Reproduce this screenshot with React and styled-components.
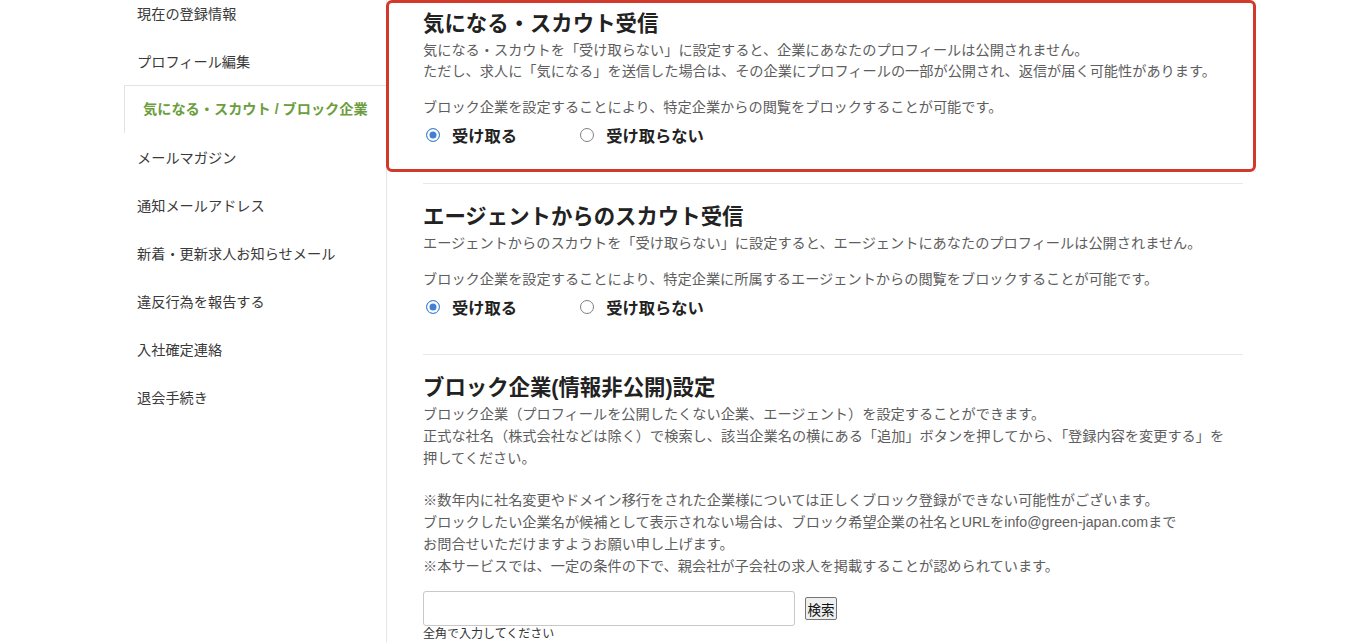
import React from "react";
import styled, { createGlobalStyle } from "styled-components";

const GlobalStyle = createGlobalStyle`
  html, body {
    margin: 0;
    padding: 0;
    overflow: hidden;
    background: #fff;
  }
  body {
    font-family: "Liberation Sans", "Noto Sans CJK JP", sans-serif;
    color: #333;
  }
`;

const Page = styled.div`
  display: flex;
  align-items: stretch;
  padding-left: 124px;
  min-height: 100vh;
`;

const Sidebar = styled.nav`
  width: 263px;
  flex-shrink: 0;
  box-sizing: border-box;
  border-right: 1px solid #e6e6e6;
  margin-top: -11px;
  display: flex;
  flex-direction: column;
`;

const NavItem = styled.div`
  height: 48px;
  box-sizing: border-box;
  display: flex;
  align-items: center;
  font-size: 14.2px;
  padding-left: ${({ $active }) => ($active ? "18px" : "13px")};
  color: ${({ $active }) => ($active ? "#6c9d3e" : "#3a3a3a")};
  font-weight: ${({ $active }) => ($active ? "bold" : "normal")};
  background: #fff;
  ${({ $active }) =>
    $active &&
    `
    border: 1px solid #e3e3e3;
    border-right: none;
    margin: 0 -1px -2px 0;
    height: 50px;
    padding-bottom: 4px;
  `}
`;

const Main = styled.main`
  width: 820px;
  padding-left: 36px;
  display: flex;
  flex-direction: column;
`;

const Highlight = styled.div`
  margin: 0 -13px 11px -37px;
  padding: 7px 10px 23px 34px;
  border: 3px solid #d2392b;
  border-radius: 6px;
`;

const Section = styled.section`
  border-top: 1px solid #e8e8e8;
  padding: 19px 0 ${({ $bottom }) => $bottom || 0}px;
`;

const Heading = styled.h2`
  margin: 0;
  font-size: 21.4px;
  line-height: 28px;
  font-weight: bold;
  color: #222;
`;

const Text = styled.p`
  margin: ${({ $top }) => $top}px 0 0;
  font-size: 14.2px;
  line-height: ${({ $lh }) => $lh || 21}px;
  color: #5e5e5e;
`;

const RadioRow = styled.div`
  display: flex;
  align-items: center;
  height: 22px;
  margin-top: 6px;
  gap: 60px;
`;

const Option = styled.label`
  display: flex;
  align-items: center;
  gap: 12px;
  font-size: 16.3px;
  font-weight: bold;
  color: #222;
`;

const Radio = styled.span`
  width: 14px;
  height: 14px;
  margin-left: 3px;
  box-sizing: border-box;
  border-radius: 50%;
  border: 1px solid ${({ $on }) => ($on ? "#4a86d6" : "#808080")};
  background: ${({ $on }) => ($on ? "#3f80d4" : "#fff")};
  box-shadow: ${({ $on }) => ($on ? "inset 0 0 0 2.5px #fff" : "none")};
`;

const SearchRow = styled.div`
  display: flex;
  align-items: center;
  gap: 10px;
  margin-top: 14px;
`;

const SearchInput = styled.input`
  width: 372px;
  height: 35px;
  box-sizing: border-box;
  border: 1px solid #c8c8c8;
  border-radius: 3px;
  padding: 0 8px;
  font-size: 14px;
  outline: none;
`;

const SearchButton = styled.button`
  width: 32px;
  height: 23px;
  box-sizing: border-box;
  padding: 0;
  border: 1px solid #767676;
  border-radius: 2px;
  background: #efefef;
  font-family: "Noto Sans CJK JP", sans-serif;
  font-size: 13.5px;
  color: #111;
`;

const Hint = styled.div`
  font-size: 12px;
  line-height: 16px;
  color: #333;
`;

const navItems = [
  "現在の登録情報",
  "プロフィール編集",
  "気になる・スカウト / ブロック企業",
  "メールマガジン",
  "通知メールアドレス",
  "新着・更新求人お知らせメール",
  "違反行為を報告する",
  "入社確定連絡",
  "退会手続き",
];

function ReceiveRadios() {
  return (
    <RadioRow>
      <Option>
        <Radio $on />
        受け取る
      </Option>
      <Option>
        <Radio />
        受け取らない
      </Option>
    </RadioRow>
  );
}

export default function App() {
  return (
    <>
      <GlobalStyle />
      <Page>
        <Sidebar>
          {navItems.map((item, i) => (
            <NavItem key={item} $active={i === 2}>
              {item}
            </NavItem>
          ))}
        </Sidebar>
        <Main>
          <Highlight>
            <Heading>気になる・スカウト受信</Heading>
            <Text $top={2}>
              気になる・スカウトを「受け取らない」に設定すると、企業にあなたのプロフィールは公開されません。
              <br />
              ただし、求人に「気になる」を送信した場合は、その企業にプロフィールの一部が公開され、返信が届く可能性があります。
            </Text>
            <Text $top={15}>
              ブロック企業を設定することにより、特定企業からの閲覧をブロックすることが可能です。
            </Text>
            <ReceiveRadios />
          </Highlight>

          <Section $bottom={36}>
            <Heading>エージェントからのスカウト受信</Heading>
            <Text $top={2}>
              エージェントからのスカウトを「受け取らない」に設定すると、エージェントにあなたのプロフィールは公開されません。
            </Text>
            <Text $top={15}>
              ブロック企業を設定することにより、特定企業に所属するエージェントからの閲覧をブロックすることが可能です。
            </Text>
            <ReceiveRadios />
          </Section>

          <Section>
            <Heading>ブロック企業(情報非公開)設定</Heading>
            <Text $top={1} $lh={22}>
              ブロック企業（プロフィールを公開したくない企業、エージェント）を設定することができます。
              <br />
              正式な社名（株式会社などは除く）で検索し、該当企業名の横にある「追加」ボタンを押してから、「登録内容を変更する」を
              <br />
              押してください。
            </Text>
            <Text $top={20} $lh={22}>
              ※数年内に社名変更やドメイン移行をされた企業様については正しくブロック登録ができない可能性がございます。
              <br />
              ブロックしたい企業名が候補として表示されない場合は、ブロック希望企業の社名とURLをinfo@green-japan.comまで
              <br />
              お問合せいただけますようお願い申し上げます。
              <br />
              ※本サービスでは、一定の条件の下で、親会社が子会社の求人を掲載することが認められています。
            </Text>
            <SearchRow>
              <SearchInput type="text" />
              <SearchButton type="button">検索</SearchButton>
            </SearchRow>
            <Hint>全角で入力してください</Hint>
          </Section>
        </Main>
      </Page>
    </>
  );
}
